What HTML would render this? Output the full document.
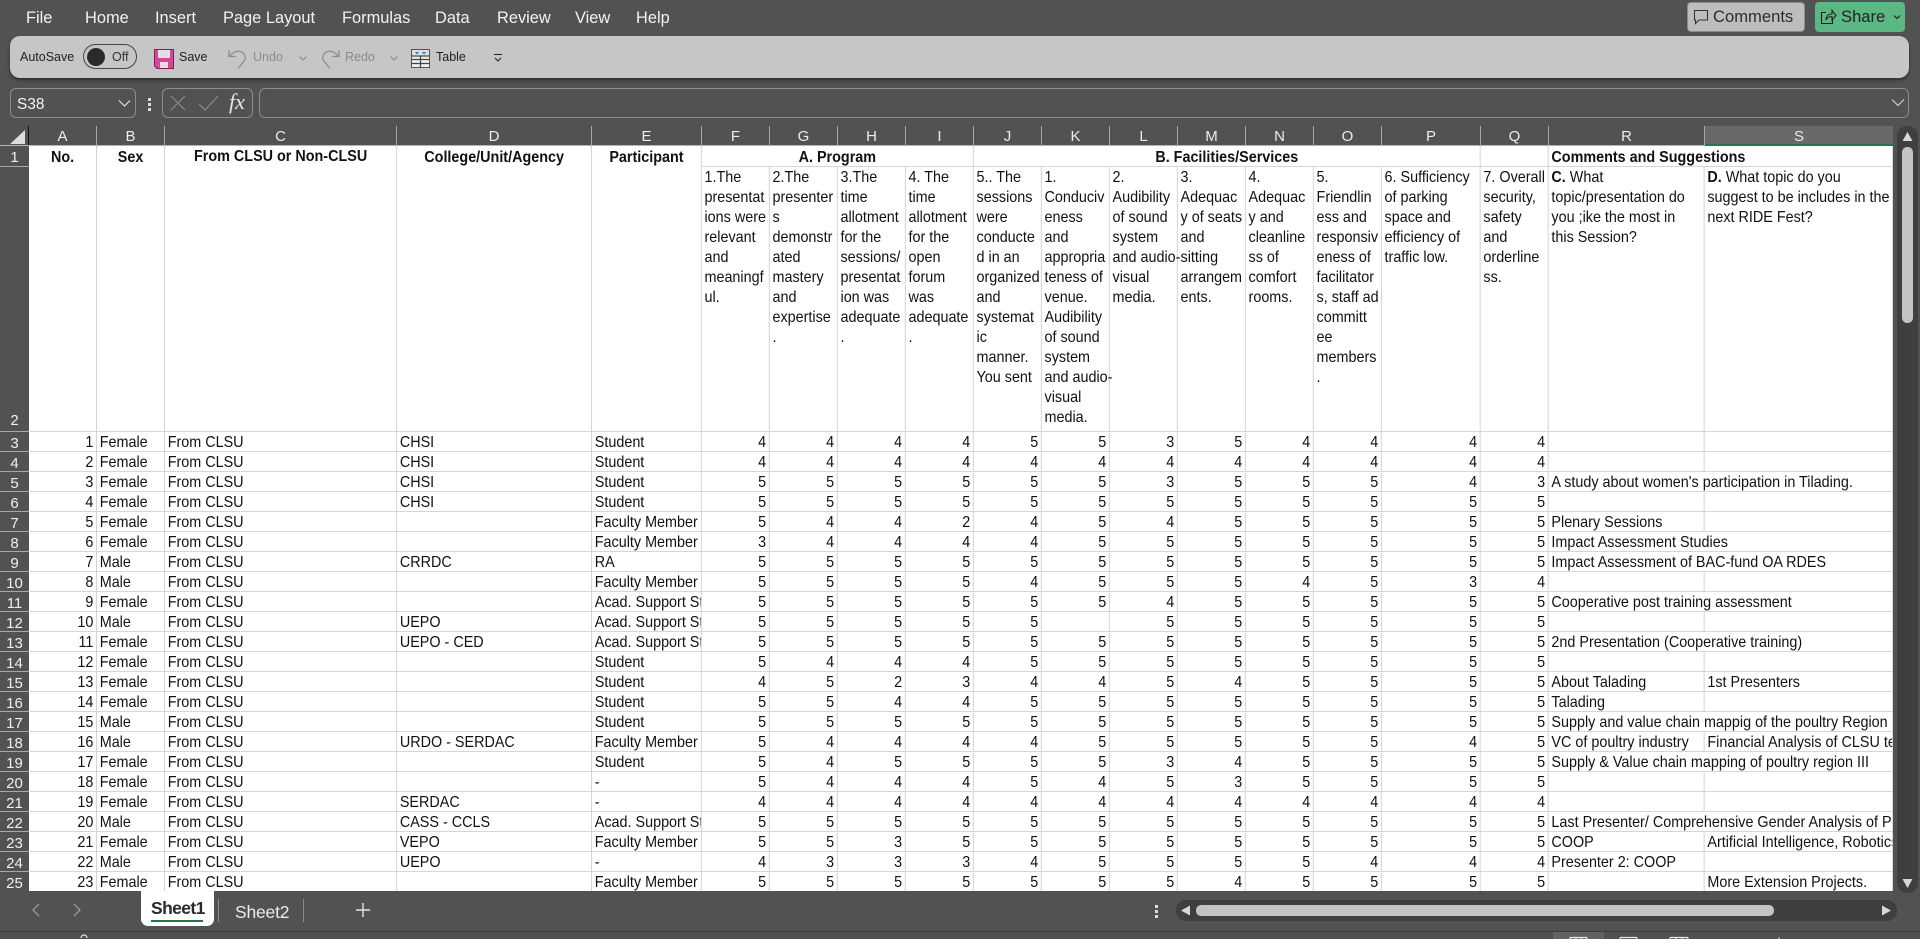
<!DOCTYPE html>
<html><head><meta charset="utf-8"><style>
html,body{margin:0;padding:0;width:1920px;height:939px;overflow:hidden;background:#525252;font-family:"Liberation Sans",sans-serif;color:#fff}
.a{position:absolute;white-space:nowrap}
.rt{font-size:16.4px;top:8px;line-height:20px;color:#f2f2f2}
#tb{position:absolute;left:10px;top:36px;width:1899px;height:42px;background:#c6c6c6;border-radius:10px;box-shadow:0 2px 3px #2c2c2c}
.tt{font-size:12.5px;line-height:16px;top:49px;color:#222}
.dis{color:#8b8b8b}
.bx{position:absolute;border:1px solid #8c8c8c;border-radius:6px;box-sizing:border-box;height:30px;top:88px}
.ch{position:absolute;top:126px;height:20px;line-height:22px;text-align:center;font-size:15px;color:#ececec;border-right:1px solid #a8a8a8;box-sizing:border-box}
.rh{position:absolute;left:0;width:29px;height:20px;line-height:23px;text-align:center;font-size:15px;color:#f0f0f0;border-bottom:1px solid #a8a8a8;box-sizing:border-box}
#gw{position:absolute;left:29px;top:146px;width:1864px;height:745px;overflow:hidden;background:#fff}
table{border-collapse:separate;border-spacing:0;table-layout:fixed;width:2056px;transform:scaleX(.9067);transform-origin:0 0;color:#111;font-size:15.85px;line-height:20px}
td{padding:0 3px;border-right:1px solid #cfcfcf;border-bottom:1px solid #d6d6d6;box-sizing:border-box;overflow:hidden;white-space:nowrap;height:20px;vertical-align:middle}
.hd{font-weight:bold}
.c{text-align:center;vertical-align:top}
.r1 td{padding-top:3px;line-height:17px;height:21px}
.r1 td.c[rowspan]{padding-top:2px;line-height:20px}
.w td{vertical-align:top;height:265px;padding-top:1px;padding-right:0;overflow:visible}
.d td{padding-top:2px;line-height:17px}
.d td:nth-child(1),.d td:nth-child(n+6):nth-child(-n+17){text-align:right}
.d td:nth-child(5){padding-right:0}
</style></head><body>

<div class="a rt" style="left:26px">File</div>
<div class="a rt" style="left:85px">Home</div>
<div class="a rt" style="left:155px">Insert</div>
<div class="a rt" style="left:223px">Page Layout</div>
<div class="a rt" style="left:342px">Formulas</div>
<div class="a rt" style="left:435px">Data</div>
<div class="a rt" style="left:497px">Review</div>
<div class="a rt" style="left:575px">View</div>
<div class="a rt" style="left:636px">Help</div>

<div class="a" style="left:1687px;top:2px;width:118px;height:30px;background:#bdbdbd;border:1px solid #8c8c8c;border-radius:4px;box-sizing:border-box"></div>
<svg class="a" style="left:1693px;top:9px" width="16" height="16" viewBox="0 0 16 16" fill="none" stroke="#333" stroke-width="1.1"><path d="M1.5 1.5h13v9.500H6l-3.500 3.500V11h-1z"/></svg>
<div class="a" style="left:1713px;top:7px;font-size:16.6px;line-height:20px;color:#2c2c2c">Comments</div>
<div class="a" style="left:1815px;top:2px;width:90px;height:30px;background:#5bb884;border-radius:4px"></div>
<svg class="a" style="left:1820px;top:8px" width="17" height="18" viewBox="0 0 17 18" fill="none" stroke="#222" stroke-width="1.1"><path d="M6 4.500H1.500v11h11V11M6 12c0-4 2.500-6 6-6V2.500l4 5-4 4.500V8.500c-3 0-5 1-6 3.500z"/></svg>
<div class="a" style="left:1841px;top:7px;font-size:16.6px;line-height:20px;color:#222">Share</div>
<svg class="a" style="left:1892px;top:14px" width="10" height="7" fill="none" stroke="#222" stroke-width="1.2"><path d="M2 1.500l3 3 3-3"/></svg>

<div id="tb"></div>
<div class="a tt" style="left:20px">AutoSave</div>
<div class="a" style="left:83px;top:44px;width:54px;height:25px;border:1px solid #444;border-radius:13px;box-sizing:border-box"></div>
<div class="a" style="left:87px;top:48px;width:18px;height:18px;border-radius:50%;background:#2a2a2a"></div>
<div class="a tt" style="left:112px;color:#333">Off</div>
<svg class="a" style="left:154px;top:49px" width="20" height="20" viewBox="0 0 20 20"><path d="M.5.500h19v19H3l-2.500-2.500z" fill="#d4479b" stroke="#7d2058"/><rect x="4" y="1" width="12" height="8" fill="#e6dde3"/><rect x="6" y="13" width="8" height="6" fill="#e6dde3"/></svg>
<div class="a tt" style="left:179px">Save</div>
<svg class="a" style="left:228px;top:48px" width="20" height="22" viewBox="0 0 20 22" fill="none" stroke="#8b8b8b" stroke-width="1.200"><path d="M1 2v6.500h6.500M1.500 8.500C4 5 8 2.500 12 3.500c4.500 1.200 6.500 5.500 4.500 9L10 20.500"/></svg>
<div class="a tt dis" style="left:253px">Undo</div>
<svg class="a" style="left:298px;top:55px" width="10" height="7" fill="none" stroke="#8b8b8b" stroke-width="1.100"><path d="M1.500 1.500l3.500 3.500 3.500-3.500"/></svg>
<svg class="a" style="left:320px;top:48px" width="20" height="22" viewBox="0 0 20 22" fill="none" stroke="#8b8b8b" stroke-width="1.200"><path d="M19 2v6.500h-6.500M18.500 8.500C16 5 12 2.500 8 3.500c-4.500 1.200-6.500 5.500-4.500 9l6.500 8"/></svg>
<div class="a tt dis" style="left:345px">Redo</div>
<svg class="a" style="left:389px;top:55px" width="10" height="7" fill="none" stroke="#8b8b8b" stroke-width="1.100"><path d="M1.500 1.500l3.500 3.500 3.500-3.500"/></svg>
<svg class="a" style="left:411px;top:49px" width="20" height="20" viewBox="0 0 20 20"><rect x=".5" y=".5" width="18" height="18" fill="#eee" stroke="#555"/><rect x="1" y="1" width="17" height="5" fill="#ddd"/><path d="M4 3h4L6 5.500zM11 3h4l-2 2.500z" fill="#1f78c8"/><path d="M1 7h17M1 10.500h17M1 14.500h17M9.500 7v12" stroke="#444" stroke-width="1.200"/></svg>
<div class="a tt" style="left:436px">Table</div>
<svg class="a" style="left:493px;top:53px" width="10" height="10" fill="none" stroke="#222" stroke-width="1"><path d="M1 1.500h8M2 5l3 3 3-3"/></svg>

<div class="bx" style="left:10px;width:126px"></div>
<div class="a" style="left:17px;top:95px;font-size:15.400px;line-height:20px;color:#f4f4f4">S38</div>
<svg class="a" style="left:118px;top:99px" width="13" height="9" fill="none" stroke="#ddd" stroke-width="1.200"><path d="M1 1.500l5.500 5.500 5.500-5.500"/></svg>
<div class="a" style="left:148px;top:98px;width:3px;height:3px;background:#ddd;box-shadow:0 5px #ddd,0 10px #ddd"></div>
<div class="bx" style="left:162px;width:91px"></div>
<svg class="a" style="left:170px;top:95px" width="16" height="16" fill="none" stroke="#8a8a8a" stroke-width="1.200"><path d="M1 1l14 14M15 1L1 15"/></svg>
<svg class="a" style="left:198px;top:95px" width="21" height="16" fill="none" stroke="#8a8a8a" stroke-width="1.200"><path d="M1 9l6 6L20 1"/></svg>
<div class="a" style="left:229px;top:91px;font:italic 22px/22px 'Liberation Serif',serif;color:#e6e6e6">fx</div>
<div class="bx" style="left:259px;width:1650px"></div>
<svg class="a" style="left:1891px;top:98px" width="14" height="10" fill="none" stroke="#ccc" stroke-width="1.200"><path d="M1 1.500l6 6 6-6"/></svg>

<!-- corner -->
<svg class="a" style="left:0;top:126px" width="29" height="20"><path d="M25 4v14H10z" fill="#dcdcdc"/><path d="M28.500 0v20" stroke="#111"/></svg>
<div class="a" style="left:0;top:145px;width:1893px;height:1px;background:#b4b4b4"></div>

<!-- col headers -->
<div class="ch" style="left:29px;width:68px">A</div>
<div class="ch" style="left:97px;width:68px">B</div>
<div class="ch" style="left:165px;width:232px">C</div>
<div class="ch" style="left:397px;width:195px">D</div>
<div class="ch" style="left:592px;width:110px">E</div>
<div class="ch" style="left:702px;width:68px">F</div>
<div class="ch" style="left:770px;width:68px">G</div>
<div class="ch" style="left:838px;width:68px">H</div>
<div class="ch" style="left:906px;width:68px">I</div>
<div class="ch" style="left:974px;width:68px">J</div>
<div class="ch" style="left:1042px;width:68px">K</div>
<div class="ch" style="left:1110px;width:68px">L</div>
<div class="ch" style="left:1178px;width:68px">M</div>
<div class="ch" style="left:1246px;width:68px">N</div>
<div class="ch" style="left:1314px;width:68px">O</div>
<div class="ch" style="left:1382px;width:99px">P</div>
<div class="ch" style="left:1481px;width:68px">Q</div>
<div class="ch" style="left:1549px;width:156px">R</div>
<div class="ch" style="left:1705px;width:188px;background:#696969;border-bottom:2px solid #1f7a4d;border-right:none;line-height:21px">S</div>

<!-- row headers -->
<div class="rh" style="top:146px;height:21px;line-height:23px">1</div>
<div class="rh" style="top:167px;height:265px;line-height:20px;padding-top:244px">2</div>
<div class="rh" style="top:432px">3</div>
<div class="rh" style="top:452px">4</div>
<div class="rh" style="top:472px">5</div>
<div class="rh" style="top:492px">6</div>
<div class="rh" style="top:512px">7</div>
<div class="rh" style="top:532px">8</div>
<div class="rh" style="top:552px">9</div>
<div class="rh" style="top:572px">10</div>
<div class="rh" style="top:592px">11</div>
<div class="rh" style="top:612px">12</div>
<div class="rh" style="top:632px">13</div>
<div class="rh" style="top:652px">14</div>
<div class="rh" style="top:672px">15</div>
<div class="rh" style="top:692px">16</div>
<div class="rh" style="top:712px">17</div>
<div class="rh" style="top:732px">18</div>
<div class="rh" style="top:752px">19</div>
<div class="rh" style="top:772px">20</div>
<div class="rh" style="top:792px">21</div>
<div class="rh" style="top:812px">22</div>
<div class="rh" style="top:832px">23</div>
<div class="rh" style="top:852px">24</div>
<div class="rh" style="top:872px;border:none">25</div>

<div id="gw"><table>
<colgroup><col style="width:75px"><col style="width:75px"><col style="width:256px"><col style="width:215px"><col style="width:121px"><col style="width:75px"><col style="width:75px"><col style="width:75px"><col style="width:75px"><col style="width:75px"><col style="width:75px"><col style="width:75px"><col style="width:75px"><col style="width:75px"><col style="width:75px"><col style="width:109px"><col style="width:75px"><col style="width:172px"><col style="width:208px"></colgroup>
<tbody>
<tr class="r1"><td class="c hd" rowspan="2">No.</td><td class="c hd" rowspan="2">Sex</td><td class="c hd" rowspan="2" style="line-height:18px">From CLSU or Non-CLSU</td><td class="c hd" rowspan="2">College/Unit/Agency</td><td class="c hd" rowspan="2">Participant</td><td class="c hd" colspan="4">A. Program</td><td class="c hd" colspan="7">B. Facilities/Services</td><td></td><td class="hd" colspan="2" style="vertical-align:top">Comments and Suggestions</td></tr>
<tr class="w"><td>1.The<br>presentat<br>ions were<br>relevant<br>and<br>meaningf<br>ul.</td><td>2.The<br>presenter<br>s<br>demonstr<br>ated<br>mastery<br>and<br>expertise<br>.</td><td>3.The<br>time<br>allotment<br>for the<br>sessions/<br>presentat<br>ion was<br>adequate<br>.</td><td>4. The<br>time<br>allotment<br>for the<br>open<br>forum<br>was<br>adequate<br>.</td><td>5.. The<br>sessions<br>were<br>conducte<br>d in an<br>organized<br>and<br>systemat<br>ic<br>manner.<br>You sent</td><td>1.<br>Conduciv<br>eness<br>and<br>appropria<br>teness of<br>venue.<br>Audibility<br>of sound<br>system<br>and audio-<br>visual<br>media.</td><td>2.<br>Audibility<br>of sound<br>system<br>and audio-<br>visual<br>media.</td><td>3.<br>Adequac<br>y of seats<br>and<br>sitting<br>arrangem<br>ents.</td><td>4.<br>Adequac<br>y and<br>cleanline<br>ss of<br>comfort<br>rooms.</td><td>5.<br>Friendlin<br>ess and<br>responsiv<br>eness of<br>facilitator<br>s, staff ad<br>committ<br>ee<br>members<br>.</td><td>6. Sufficiency<br>of parking<br>space and<br>efficiency of<br>traffic low.</td><td>7. Overall<br>security,<br>safety<br>and<br>orderline<br>ss.</td><td><b>C.</b> What<br>topic/presentation do<br>you ;ike the most in<br>this Session?</td><td><b>D.</b> What topic do you<br>suggest to be includes in the<br>next RIDE Fest?</td></tr>
</tbody>
<tbody class="d">
<tr><td>1</td><td>Female</td><td>From CLSU</td><td>CHSI</td><td>Student</td><td>4</td><td>4</td><td>4</td><td>4</td><td>5</td><td>5</td><td>3</td><td>5</td><td>4</td><td>4</td><td>4</td><td>4</td><td></td><td></td></tr>
<tr><td>2</td><td>Female</td><td>From CLSU</td><td>CHSI</td><td>Student</td><td>4</td><td>4</td><td>4</td><td>4</td><td>4</td><td>4</td><td>4</td><td>4</td><td>4</td><td>4</td><td>4</td><td>4</td><td></td><td></td></tr>
<tr><td>3</td><td>Female</td><td>From CLSU</td><td>CHSI</td><td>Student</td><td>5</td><td>5</td><td>5</td><td>5</td><td>5</td><td>5</td><td>3</td><td>5</td><td>5</td><td>5</td><td>4</td><td>3</td><td colspan="2">A study about women's participation in Tilading.</td></tr>
<tr><td>4</td><td>Female</td><td>From CLSU</td><td>CHSI</td><td>Student</td><td>5</td><td>5</td><td>5</td><td>5</td><td>5</td><td>5</td><td>5</td><td>5</td><td>5</td><td>5</td><td>5</td><td>5</td><td></td><td></td></tr>
<tr><td>5</td><td>Female</td><td>From CLSU</td><td></td><td>Faculty Member</td><td>5</td><td>4</td><td>4</td><td>2</td><td>4</td><td>5</td><td>4</td><td>5</td><td>5</td><td>5</td><td>5</td><td>5</td><td>Plenary Sessions</td><td></td></tr>
<tr><td>6</td><td>Female</td><td>From CLSU</td><td></td><td>Faculty Member</td><td>3</td><td>4</td><td>4</td><td>4</td><td>4</td><td>5</td><td>5</td><td>5</td><td>5</td><td>5</td><td>5</td><td>5</td><td colspan="2">Impact Assessment Studies</td></tr>
<tr><td>7</td><td>Male</td><td>From CLSU</td><td>CRRDC</td><td>RA</td><td>5</td><td>5</td><td>5</td><td>5</td><td>5</td><td>5</td><td>5</td><td>5</td><td>5</td><td>5</td><td>5</td><td>5</td><td colspan="2">Impact Assessment of BAC-fund OA RDES</td></tr>
<tr><td>8</td><td>Male</td><td>From CLSU</td><td></td><td>Faculty Member</td><td>5</td><td>5</td><td>5</td><td>5</td><td>4</td><td>5</td><td>5</td><td>5</td><td>4</td><td>5</td><td>3</td><td>4</td><td></td><td></td></tr>
<tr><td>9</td><td>Female</td><td>From CLSU</td><td></td><td>Acad. Support Staff</td><td>5</td><td>5</td><td>5</td><td>5</td><td>5</td><td>5</td><td>4</td><td>5</td><td>5</td><td>5</td><td>5</td><td>5</td><td colspan="2">Cooperative post training assessment</td></tr>
<tr><td>10</td><td>Male</td><td>From CLSU</td><td>UEPO</td><td>Acad. Support Staff</td><td>5</td><td>5</td><td>5</td><td>5</td><td>5</td><td></td><td>5</td><td>5</td><td>5</td><td>5</td><td>5</td><td>5</td><td></td><td></td></tr>
<tr><td>11</td><td>Female</td><td>From CLSU</td><td>UEPO - CED</td><td>Acad. Support Staff</td><td>5</td><td>5</td><td>5</td><td>5</td><td>5</td><td>5</td><td>5</td><td>5</td><td>5</td><td>5</td><td>5</td><td>5</td><td colspan="2">2nd Presentation (Cooperative training)</td></tr>
<tr><td>12</td><td>Female</td><td>From CLSU</td><td></td><td>Student</td><td>5</td><td>4</td><td>4</td><td>4</td><td>5</td><td>5</td><td>5</td><td>5</td><td>5</td><td>5</td><td>5</td><td>5</td><td></td><td></td></tr>
<tr><td>13</td><td>Female</td><td>From CLSU</td><td></td><td>Student</td><td>4</td><td>5</td><td>2</td><td>3</td><td>4</td><td>4</td><td>5</td><td>4</td><td>5</td><td>5</td><td>5</td><td>5</td><td>About Talading</td><td>1st Presenters</td></tr>
<tr><td>14</td><td>Female</td><td>From CLSU</td><td></td><td>Student</td><td>5</td><td>5</td><td>4</td><td>4</td><td>5</td><td>5</td><td>5</td><td>5</td><td>5</td><td>5</td><td>5</td><td>5</td><td>Talading</td><td></td></tr>
<tr><td>15</td><td>Male</td><td>From CLSU</td><td></td><td>Student</td><td>5</td><td>5</td><td>5</td><td>5</td><td>5</td><td>5</td><td>5</td><td>5</td><td>5</td><td>5</td><td>5</td><td>5</td><td colspan="2">Supply and value chain mappig of the poultry Region III</td></tr>
<tr><td>16</td><td>Male</td><td>From CLSU</td><td>URDO - SERDAC</td><td>Faculty Member</td><td>5</td><td>4</td><td>4</td><td>4</td><td>4</td><td>5</td><td>5</td><td>5</td><td>5</td><td>5</td><td>4</td><td>5</td><td>VC of poultry industry</td><td>Financial Analysis of CLSU technologies</td></tr>
<tr><td>17</td><td>Female</td><td>From CLSU</td><td></td><td>Student</td><td>5</td><td>4</td><td>5</td><td>5</td><td>5</td><td>5</td><td>3</td><td>4</td><td>5</td><td>5</td><td>5</td><td>5</td><td colspan="2">Supply &amp; Value chain mapping of poultry region III</td></tr>
<tr><td>18</td><td>Female</td><td>From CLSU</td><td></td><td>-</td><td>5</td><td>4</td><td>4</td><td>4</td><td>5</td><td>4</td><td>5</td><td>3</td><td>5</td><td>5</td><td>5</td><td>5</td><td></td><td></td></tr>
<tr><td>19</td><td>Female</td><td>From CLSU</td><td>SERDAC</td><td>-</td><td>4</td><td>4</td><td>4</td><td>4</td><td>4</td><td>4</td><td>4</td><td>4</td><td>4</td><td>4</td><td>4</td><td>4</td><td></td><td></td></tr>
<tr><td>20</td><td>Male</td><td>From CLSU</td><td>CASS - CCLS</td><td>Acad. Support Staff</td><td>5</td><td>5</td><td>5</td><td>5</td><td>5</td><td>5</td><td>5</td><td>5</td><td>5</td><td>5</td><td>5</td><td>5</td><td colspan="2">Last Presenter/ Comprehensive Gender Analysis of Programs</td></tr>
<tr><td>21</td><td>Female</td><td>From CLSU</td><td>VEPO</td><td>Faculty Member</td><td>5</td><td>5</td><td>3</td><td>5</td><td>5</td><td>5</td><td>5</td><td>5</td><td>5</td><td>5</td><td>5</td><td>5</td><td>COOP</td><td>Artificial Intelligence, Robotics</td></tr>
<tr><td>22</td><td>Male</td><td>From CLSU</td><td>UEPO</td><td>-</td><td>4</td><td>3</td><td>3</td><td>3</td><td>4</td><td>5</td><td>5</td><td>5</td><td>5</td><td>4</td><td>4</td><td>4</td><td>Presenter 2: COOP</td><td></td></tr>
<tr><td>23</td><td>Female</td><td>From CLSU</td><td></td><td>Faculty Member</td><td>5</td><td>5</td><td>5</td><td>5</td><td>5</td><td>5</td><td>5</td><td>4</td><td>5</td><td>5</td><td>5</td><td>5</td><td></td><td>More Extension Projects.</td></tr>
</tbody></table></div>

<!-- vertical scrollbar -->
<div class="a" style="left:1897px;top:126px;width:21px;height:767px;background:#3f3f3f;border-radius:10px"></div>
<div class="a" style="left:1902px;top:147px;width:11px;height:176px;background:#c4c4c4;border-radius:5px"></div>
<svg class="a" style="left:1902px;top:131px" width="11" height="11"><path d="M5.500 1L10.500 10H.5z" fill="#d8d8d8"/></svg>
<svg class="a" style="left:1902px;top:878px" width="11" height="11"><path d="M5.500 10L10.500 1H.5z" fill="#d8d8d8"/></svg>

<!-- sheet tabs -->
<svg class="a" style="left:30px;top:902px" width="52" height="16" fill="none" stroke="#9a9a9a" stroke-width="1.300"><path d="M9 2L3 8l6 6M44 2l6 6-6 6"/></svg>
<div class="a" style="left:141px;top:891px;width:73px;height:35px;background:#fff;border-radius:0 0 7px 7px"></div>
<div class="a" style="left:151px;top:898px;font-size:17.500px;line-height:20px;font-weight:bold;color:#2a2a2a;letter-spacing:-.6px">Sheet1</div>
<div class="a" style="left:151px;top:920px;width:52px;height:2px;background:#1a7a48"></div>
<div class="a" style="left:218px;top:899px;width:1px;height:23px;background:#8a8a8a"></div>
<div class="a" style="left:235px;top:902px;font-size:17.500px;line-height:20px;color:#ececec;letter-spacing:-.2px">Sheet2</div>
<div class="a" style="left:303px;top:899px;width:1px;height:23px;background:#8a8a8a"></div>
<svg class="a" style="left:355px;top:902px" width="16" height="16" stroke="#e4e4e4" stroke-width="1.400"><path d="M8 1v14M1 8h14"/></svg>
<div class="a" style="left:1155px;top:905px;width:3px;height:3px;background:#ddd;box-shadow:0 5px #ddd,0 10px #ddd"></div>
<div class="a" style="left:1176px;top:900px;width:721px;height:21px;background:#3f3f3f;border-radius:10px"></div>
<div class="a" style="left:1196px;top:905px;width:578px;height:11px;background:#c4c4c4;border-radius:5px"></div>
<svg class="a" style="left:1180px;top:905px" width="11" height="11"><path d="M1 5.500L10 .5v10z" fill="#d8d8d8"/></svg>
<svg class="a" style="left:1881px;top:905px" width="11" height="11"><path d="M10 5.500L1 .5v10z" fill="#d8d8d8"/></svg>

<!-- status -->
<div class="a" style="left:0;top:931px;width:1920px;height:1px;background:#3a3a3a"></div>
<div class="a" style="left:0;top:932px;width:1920px;height:7px;background:#505050"></div>
<div class="a" style="left:1553px;top:932px;width:51px;height:7px;background:#626262"></div>
<svg class="a" style="left:0;top:932px" width="1920" height="7" fill="none" stroke="#e8e8e8" stroke-width="1.200"><path d="M1570 5.500h17M1570 8v-2.500M1576 8v-2.500M1581 8v-2.500M1587 8v-2.500M1620 5.500h17M1620 8v-2.500M1637 8v-2.500M1670 5.500h18M1670 8v-2.500M1676 8v-2.500M1682 8v-2.500M1688 8v-2.500M1779 5.500v3M81 6a2.500 2.500 0 0 1 6 0"/></svg>
</body></html>
